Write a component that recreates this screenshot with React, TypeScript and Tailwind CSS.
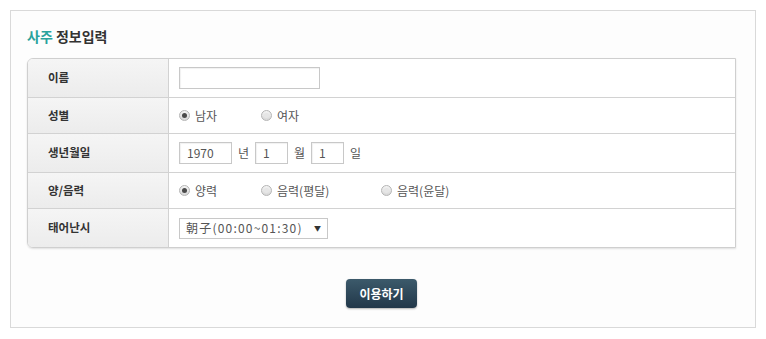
import React from "react";

const font = { fontFamily: '"Noto Sans CJK KR", "Noto Sans", sans-serif' };

function Radio({ checked }: { checked?: boolean }) {
  return (
    <span className="flex h-[11px] w-[11px] items-center justify-center rounded-full border border-[#b5b5b5] bg-gradient-to-b from-[#f4f4f4] to-[#d8d8d8]">
      {checked ? (
        <span className="h-[5px] w-[5px] rounded-full bg-[#4a4a4a]" />
      ) : (
        <span className="h-[5px] w-[5px] rounded-full bg-[#e6e6e6]" />
      )}
    </span>
  );
}

function RadioOption({ label, checked, width }: { label: string; checked?: boolean; width: string }) {
  return (
    <label className={`flex items-center gap-[5px] ${width}`}>
      <Radio checked={checked} />
      <span className="text-[12px] text-[#555]">{label}</span>
    </label>
  );
}

function Row({ label, h, last, children }: { label: string; h: string; last?: boolean; children: React.ReactNode }) {
  return (
    <div className={`flex ${h} ${last ? "" : "border-b border-[#d2d2d2]"}`}>
      <div className="flex w-[141px] shrink-0 items-center border-r border-[#d2d2d2] bg-gradient-to-b from-[#f5f5f5] to-[#ececec] pl-[20px] text-[11.5px] font-bold text-[#333]">
        {label}
      </div>
      <div className="flex flex-1 items-center bg-white pl-[10px]">{children}</div>
    </div>
  );
}

function Box({ w, value }: { w: string; value?: string }) {
  return (
    <div className={`flex h-[22px] ${w} items-center border border-[#c8c8c8] bg-white pl-[7px] text-[12px] text-[#555] shadow-[inset_1px_1px_1px_rgba(0,0,0,0.06)]`}>
      {value}
    </div>
  );
}

export default function App() {
  return (
    <div className="min-h-[339px] bg-white pt-[10px]" style={font}>
      <div className="mx-[10px] h-[318px] border border-[#d9d9d9] bg-[#fdfdfd]">
        <h2 className="pl-[16px] pt-[15px] text-[14px] font-bold leading-[20px] text-[#333]">
          <span className="text-[#2aa39c]">사주</span> 정보입력
        </h2>
        <div className="ml-[16px] mt-[12px] w-[709px] overflow-hidden rounded-l-[6px] border border-[#cfcfcf] shadow-[0_1px_2px_rgba(0,0,0,0.12)]">
          <Row label="이름" h="h-[39px]">
            <Box w="w-[141px]" />
          </Row>
          <Row label="성별" h="h-[36px]">
            <RadioOption label="남자" checked width="w-[82px]" />
            <RadioOption label="여자" width="w-[80px]" />
          </Row>
          <Row label="생년월일" h="h-[39px]">
            <Box w="w-[53px]" value="1970" />
            <span className="mx-[6px] text-[12px] text-[#555]">년</span>
            <Box w="w-[33px]" value="1" />
            <span className="mx-[6px] text-[12px] text-[#555]">월</span>
            <Box w="w-[33px]" value="1" />
            <span className="ml-[6px] text-[12px] text-[#555]">일</span>
          </Row>
          <Row label="양/음력" h="h-[36px]">
            <RadioOption label="양력" checked width="w-[82px]" />
            <RadioOption label="음력(평달)" width="w-[120px]" />
            <RadioOption label="음력(윤달)" width="w-[100px]" />
          </Row>
          <Row label="태어난시" h="h-[38px]" last>
            <div className="flex h-[21px] w-[149px] items-center justify-between border border-[#c8c8c8] bg-white pl-[6px] pr-[6px] text-[12px] text-[#555]">
              <span className="tracking-[1.2px]">朝子(00:00~01:30)</span>
              <span className="text-[7px] text-[#333]">▼</span>
            </div>
          </Row>
        </div>
        <div className="mt-[31px] flex justify-center pr-[3px]">
          <button className="h-[29px] w-[71px] rounded-[4px] bg-gradient-to-b from-[#3c5a6b] to-[#22384a] text-[12px] font-bold text-white shadow-[0_1px_2px_rgba(0,0,0,0.3)]">
            이용하기
          </button>
        </div>
      </div>
    </div>
  );
}
